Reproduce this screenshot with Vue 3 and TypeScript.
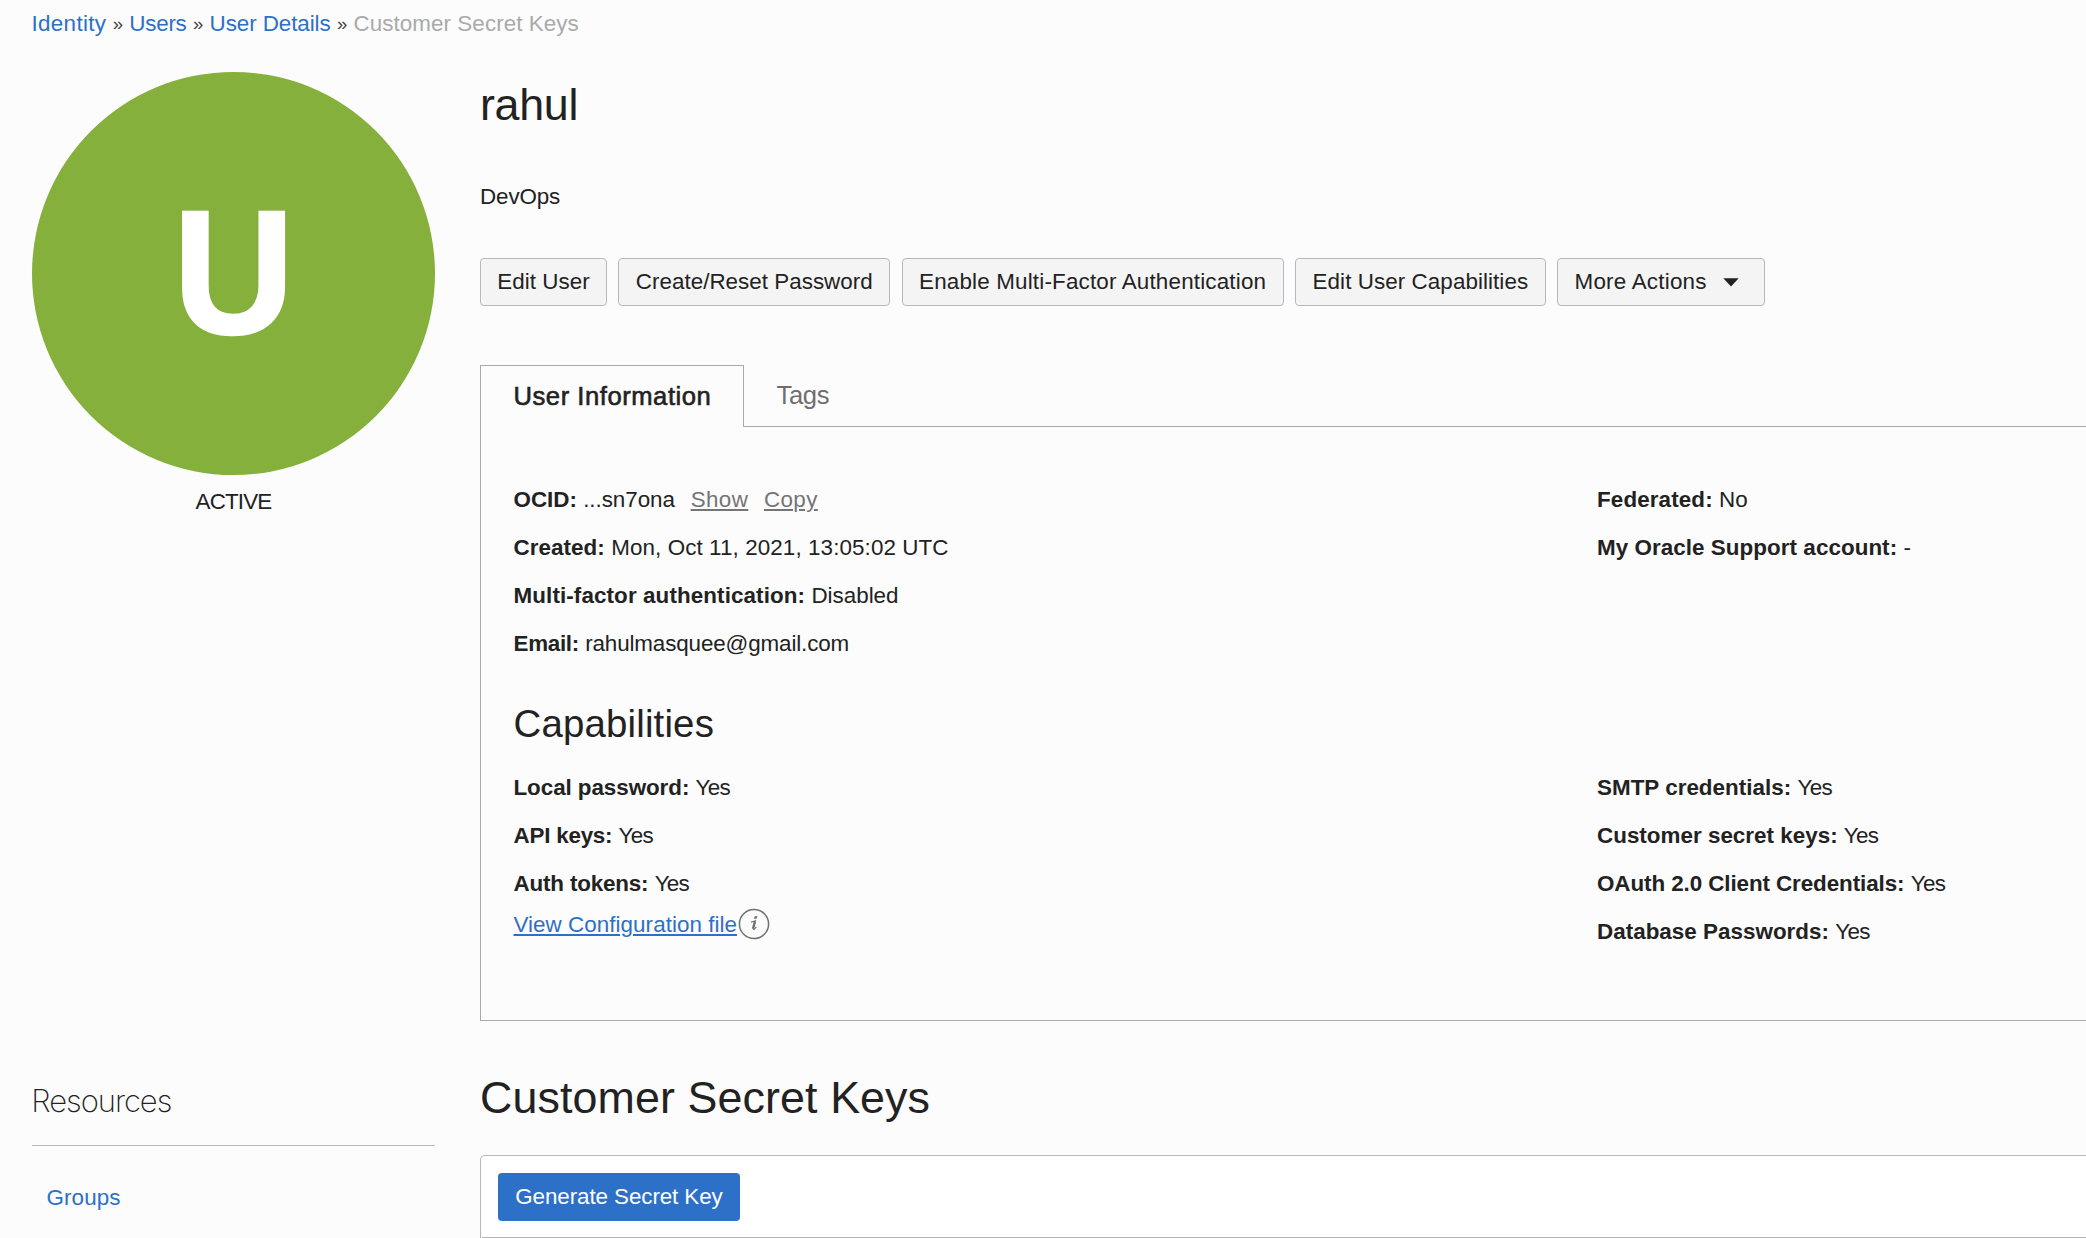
<script setup lang="ts">
interface Label { text: string; ls: number }
interface Field { label: string; value: string; ls: number; vls: number }

const crumbs: Label[] = [
  { text: 'Identity', ls: 0.33 },
  { text: 'Users', ls: -0.25 },
  { text: 'User Details', ls: -0.08 },
]

const actions: (Label & { width: number })[] = [
  { text: 'Edit User', ls: 0.05, width: 127 },
  { text: 'Create/Reset Password', ls: 0.02, width: 272 },
  { text: 'Enable Multi-Factor Authentication', ls: 0.18, width: 382 },
  { text: 'Edit User Capabilities', ls: 0.07, width: 251 },
]

const infoLeft: Field[] = [
  { label: 'Created:', value: 'Mon, Oct 11, 2021, 13:05:02 UTC', ls: 0.07, vls: 0.1 },
  { label: 'Multi-factor authentication:', value: 'Disabled', ls: 0.11, vls: 0 },
  { label: 'Email:', value: 'rahulmasquee@gmail.com', ls: -0.3, vls: -0.12 },
]
const infoRight: Field[] = [
  { label: 'Federated:', value: 'No', ls: 0.13, vls: 0 },
  { label: 'My Oracle Support account:', value: '-', ls: 0.06, vls: 0 },
]
const capsLeft: Field[] = [
  { label: 'Local password:', value: 'Yes', ls: -0.06, vls: -0.7 },
  { label: 'API keys:', value: 'Yes', ls: -0.22, vls: -0.7 },
  { label: 'Auth tokens:', value: 'Yes', ls: -0.16, vls: -0.7 },
]
const capsRight: Field[] = [
  { label: 'SMTP credentials:', value: 'Yes', ls: 0.03, vls: -0.7 },
  { label: 'Customer secret keys:', value: 'Yes', ls: 0.02, vls: -0.7 },
  { label: 'OAuth 2.0 Client Credentials:', value: 'Yes', ls: -0.08, vls: -0.7 },
  { label: 'Database Passwords:', value: 'Yes', ls: 0.03, vls: -0.7 },
]

const px = (n: number) => ({ letterSpacing: `${n}px` })
</script>

<template>
  <div class="page">
    <nav class="crumbs">
      <template v-for="c in crumbs" :key="c.text">
        <a class="link" :style="px(c.ls)">{{ c.text }}</a><span class="sep">»</span>
      </template>
      <span class="current">Customer Secret Keys</span>
    </nav>

    <div class="layout">
      <aside class="profile">
        <div class="avatar"><span class="initial">U</span></div>
        <div class="state">ACTIVE</div>
      </aside>

      <main class="details">
        <h1 class="title name">rahul</h1>
        <p class="desc">DevOps</p>
        <div class="actions">
          <button v-for="a in actions" :key="a.text" class="btn" :style="{ width: a.width + 'px', ...px(a.ls) }">{{ a.text }}</button>
          <button class="btn more">More Actions
            <svg class="caret" width="16" height="9" viewBox="0 0 16 9"><path d="M0.3 0.3H15.7L8 8.4Z" fill="#222" /></svg>
          </button>
        </div>

        <div class="tabs">
          <div class="tab active">User Information</div>
          <div class="tab">Tags</div>
        </div>
        <section class="panel">
          <div class="cols">
            <div class="col">
              <div class="field">
                <b>OCID:</b> <span class="ocid">...sn7ona</span><a class="grey">Show</a><a class="grey">Copy</a>
              </div>
              <div v-for="f in infoLeft" :key="f.label" class="field">
                <b :style="px(f.ls)">{{ f.label }}</b> <span :style="px(f.vls)">{{ f.value }}</span>
              </div>
            </div>
            <div class="col">
              <div v-for="f in infoRight" :key="f.label" class="field">
                <b :style="px(f.ls)">{{ f.label }}</b> <span :style="px(f.vls)">{{ f.value }}</span>
              </div>
            </div>
          </div>
          <h2 class="subtitle">Capabilities</h2>
          <div class="cols">
            <div class="col">
              <div v-for="f in capsLeft" :key="f.label" class="field">
                <b :style="px(f.ls)">{{ f.label }}</b> <span :style="px(f.vls)">{{ f.value }}</span>
              </div>
              <div class="config">
                <a class="link underlined">View Configuration file</a>
                <svg class="info" width="32" height="32" viewBox="0 0 32 32">
                  <circle cx="16" cy="16" r="14.6" fill="none" stroke="#707070" stroke-width="1.5" />
                  <path d="M16.6 8.4L19.4 8L18.8 10.6L16 11Z" fill="#707070" />
                  <path d="M13 14.1C14.6 13.8 16.1 13.3 17.4 12.7L15.2 20.4C15 21.5 15.7 21.6 16.4 21C17.2 20.4 17.8 19.7 18.4 18.9" fill="none" stroke="#707070" stroke-width="1.1" />
                  <path d="M17 13.4L15 20.6" fill="none" stroke="#707070" stroke-width="2.3" />
                </svg>
              </div>
            </div>
            <div class="col">
              <div v-for="f in capsRight" :key="f.label" class="field">
                <b :style="px(f.ls)">{{ f.label }}</b> <span :style="px(f.vls)">{{ f.value }}</span>
              </div>
            </div>
          </div>
        </section>
      </main>

      <aside class="resources">
        <h3 class="res-title">Resources</h3>
        <a class="link res-item">Groups</a>
      </aside>

      <section class="keys">
        <h1 class="title keys-title">Customer Secret Keys</h1>
        <div class="table">
          <div class="toolbar"><button class="primary">Generate Secret Key</button></div>
        </div>
      </section>
    </div>
  </div>
</template>

<style>
body { margin: 0; background: #fcfcfc; overflow: hidden; }
</style>

<style scoped>
.page {
  box-sizing: border-box;
  width: 2086px;
  height: 1238px;
  overflow: hidden;
  padding-top: 11px;
  background: #fcfcfc;
  color: #222;
  font: 22.4px/25px "Liberation Sans", Arial, sans-serif;
}
h1, h2, h3, p { margin: 0; font-weight: 400; }
button { font: inherit; color: inherit; }
.link { color: #2d70c7; }
.crumbs { display: flex; height: 61px; padding-left: 31.5px; white-space: nowrap; }
.sep { width: 23px; text-align: center; font-size: 18.5px; color: #444; }
.current { color: #aaa; letter-spacing: 0.06px; }

.layout {
  display: grid;
  grid-template-columns: 403px 1606px;
  grid-template-rows: 1000px auto;
  column-gap: 45px;
  padding-left: 32px;
}
.avatar {
  display: flex;
  justify-content: center;
  width: 403px;
  height: 403px;
  border-radius: 50%;
  background: #85b03c;
}
.initial {
  margin-top: 101px;
  color: #fff;
  font-size: 176px;
  line-height: 199px;
  font-weight: 700;
  transform: scaleX(0.95);
  -webkit-text-stroke: 2.6px #fff;
}
.state { margin-top: 14px; text-align: center; letter-spacing: -0.85px; }

.title { font-size: 44.8px; line-height: 50px; }
.name { margin-top: 7px; letter-spacing: -0.3px; }
.desc { margin-top: 55px; letter-spacing: -0.12px; }
.actions { display: flex; gap: 11.3px; margin-top: 49px; }
.btn {
  box-sizing: border-box;
  height: 48px;
  padding: 0 0 2px;
  border: 1px solid #b4b8bf;
  border-radius: 4px;
  background: #f4f4f4;
  white-space: nowrap;
}
.more { display: flex; align-items: center; width: 208px; padding-left: 16.4px; letter-spacing: 0.22px; }
.caret { margin: 2px 0 0 16.3px; }

.tabs { display: flex; height: 61px; margin-top: 59px; font-size: 25.6px; line-height: 28px; }
.tab { padding: 16px 0 0 32.5px; color: #6f6f6f; letter-spacing: -0.35px; }
.tab.active {
  box-sizing: border-box;
  position: relative;
  width: 264px;
  height: 62px;
  border: 1px solid #a9a9a9;
  border-bottom: 0;
  background: #fcfcfc;
  color: #222;
  letter-spacing: 0.54px;
  -webkit-text-stroke: 0.6px #222;
}
.panel {
  box-sizing: border-box;
  height: 595px;
  padding: 60px 0 0 32.5px;
  border: 1px solid #a9a9a9;
  border-right: 0;
}
.cols { display: grid; grid-template-columns: 1083.5px auto; }
.field { height: 25px; white-space: nowrap; }
.field + .field { margin-top: 23px; }
.ocid { letter-spacing: -0.04px; }
.grey { margin-left: 15.7px; color: #757575; letter-spacing: 0.4px; text-decoration: underline; text-decoration-thickness: 2px; text-underline-offset: 2px; }
.subtitle { margin: 46px 0 30px; font-size: 38.4px; line-height: 43px; letter-spacing: 0.17px; }
.config { display: flex; height: 25px; margin-top: 16px; }
.underlined { letter-spacing: 0.05px; text-decoration: underline; text-decoration-thickness: 2px; text-underline-offset: 2px; }
.info { margin: -4px 0 0 0.5px; }

.resources { padding-top: 10px; }
.res-title {
  height: 63px;
  border-bottom: 1px solid #b4b8bf;
  font: 200 31px/38px Inter, sans-serif;
  letter-spacing: -1.05px;
  text-indent: -0.7px;
}
.res-item { display: block; margin: 39px 0 0 14.5px; letter-spacing: 0.12px; }
.keys-title { letter-spacing: 0.1px; }
.table {
  height: 120px;
  margin-top: 33px;
  border: 1px solid #b4b8bf;
  border-right: 0;
  border-radius: 5px 0 0 0;
  background: #fff;
}
.toolbar { box-sizing: border-box; height: 82px; margin-left: 1px; padding: 17px 0 0 16px; border-bottom: 1px solid #b4b4b4; }
.primary {
  width: 242px;
  height: 48px;
  padding: 0 0 2px;
  border: 0;
  border-radius: 4px;
  background: #2d70c7;
  color: #fff;
  letter-spacing: -0.09px;
}
</style>
